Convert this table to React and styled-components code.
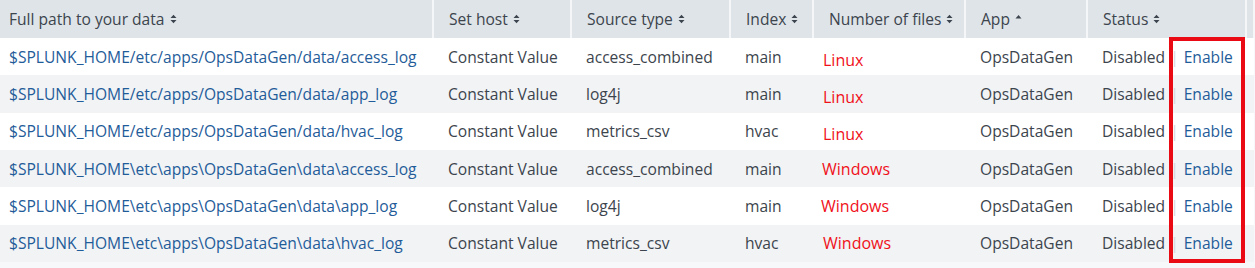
import React from "react";
import styled, { createGlobalStyle } from "styled-components";

const rows = [
  { path: "$SPLUNK_HOME/etc/apps/OpsDataGen/data/access_log", type: "access_combined", index: "main", os: "Linux", shift: 0 },
  { path: "$SPLUNK_HOME/etc/apps/OpsDataGen/data/app_log", type: "log4j", index: "main", os: "Linux", shift: 0 },
  { path: "$SPLUNK_HOME/etc/apps/OpsDataGen/data/hvac_log", type: "metrics_csv", index: "hvac", os: "Linux", shift: 0 },
  { path: "$SPLUNK_HOME\\etc\\apps\\OpsDataGen\\data\\access_log", type: "access_combined", index: "main", os: "Windows", shift: -1 },
  { path: "$SPLUNK_HOME\\etc\\apps\\OpsDataGen\\data\\app_log", type: "log4j", index: "main", os: "Windows", shift: -2 },
  { path: "$SPLUNK_HOME\\etc\\apps\\OpsDataGen\\data\\hvac_log", type: "metrics_csv", index: "hvac", os: "Windows", shift: 0 },
];

const columns = [
  { label: "Full path to your data", width: 433, first: true },
  { label: "Set host", width: 138 },
  { label: "Source type", width: 159 },
  { label: "Index", width: 83 },
  { label: "Number of files", width: 152 },
  { label: "App", width: 122, sorted: true },
  { label: "Status", width: 159 },
];

const SortIcon = ({ asc }) =>
  asc ? (
    <svg width="7" height="10" viewBox="0 0 7 10">
      <path d="M0.5 4.5 L3.5 1 L6.5 4.5 Z" fill="#3c444d" />
    </svg>
  ) : (
    <svg width="7" height="10" viewBox="0 0 7 10">
      <path d="M0.5 4 L3.5 0.8 L6.5 4 Z M0.5 6 L3.5 9.2 L6.5 6 Z" fill="#3c444d" />
    </svg>
  );

const App = () => {
  return (
    <>
      <GlobalStyle />
      <Wrapper>
        <Table>
          <colgroup>
            {columns.map((c) => (
              <col key={c.label} style={{ width: c.width }} />
            ))}
            <col />
          </colgroup>
          <thead>
            <tr>
              {columns.map((c) => (
                <Th key={c.label} $first={c.first}>
                  <HeadLabel>
                    {c.label}
                    <SortIcon asc={c.sorted} />
                  </HeadLabel>
                </Th>
              ))}
              <Th />
            </tr>
          </thead>
          <tbody>
            {rows.map((r, i) => (
              <Row key={i} $odd={i % 2 === 1}>
                <Td $first>
                  <PathLink>{r.path}</PathLink>
                </Td>
                <Td>Constant Value</Td>
                <Td>{r.type}</Td>
                <Td>{r.index}</Td>
                <Td $tight>
                  <OsLabel $linux={r.os === "Linux"} $shift={r.shift}>
                    {r.os}
                  </OsLabel>
                </Td>
                <Td>OpsDataGen</Td>
                <Td>
                  Disabled
                  <Divider>|</Divider>
                  <ActionLink>Enable</ActionLink>
                </Td>
                <Td />
              </Row>
            ))}
          </tbody>
        </Table>
        <Highlight />
      </Wrapper>
    </>
  );
};

export default App;

const GlobalStyle = createGlobalStyle`
  body {
    margin: 0;
    background: #ffffff;
    font-family: "Open Sans", "Liberation Sans", sans-serif;
  }
`;

const Wrapper = styled.div`
  position: relative;
  width: 1255px;
  height: 268px;
  overflow: hidden;
  background: #f7f8f9;
`;

const Table = styled.table`
  width: 1255px;
  border-collapse: collapse;
  table-layout: fixed;
  font-size: 15.6px;
  color: #3c444d;
`;

const Th = styled.th`
  height: 38px;
  padding: 0 0 0 ${(p) => (p.$first ? "9px" : "15px")};
  background: #dfe4e9;
  border-right: 2px solid #f4f6f8;
  text-align: left;
  font-weight: 400;
  white-space: nowrap;
`;

const HeadLabel = styled.span`
  display: inline-flex;
  align-items: center;
  gap: 5px;
`;

const Row = styled.tr`
  background: ${(p) => (p.$odd ? "#f1f3f5" : "#ffffff")};
`;

const Td = styled.td`
  height: 37.33px;
  padding: 0 0 0 ${(p) => (p.$first ? "9px" : p.$tight ? "10px" : "15px")};
  white-space: nowrap;
  overflow: hidden;
`;

const PathLink = styled.a`
  color: #1f5c99;
  cursor: pointer;
`;

const OsLabel = styled.span`
  display: inline-block;
  color: #f0101a;
  font-size: 16px;
  margin-left: ${(p) => p.$shift}px;
  transform: translateY(${(p) => (p.$linux ? "3px" : "0")});
`;

const Divider = styled.span`
  color: #d3d7db;
  margin: 0 5px 0 5px;
`;

const ActionLink = styled.a`
  color: #1f5c99;
  cursor: pointer;
`;

const Highlight = styled.div`
  position: absolute;
  left: 1169px;
  top: 37px;
  width: 76px;
  height: 226px;
  box-sizing: border-box;
  border: 4px solid #ea0a14;
  pointer-events: none;
`;
